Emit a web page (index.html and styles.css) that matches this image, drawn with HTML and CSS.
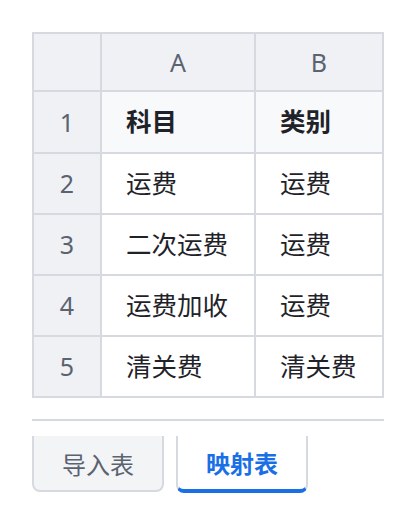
FILE: index.html
```html
<!DOCTYPE html>
<html lang="zh-CN">
<head>
<meta charset="utf-8">
<link rel="stylesheet" href="styles.css">
</head>
<body>
<div class="sheet">
  <div class="grid">
    <div class="cell corner"></div>
    <div class="cell colhead">A</div>
    <div class="cell colhead">B</div>

    <div class="cell rowhead">1</div>
    <div class="cell title">科目</div>
    <div class="cell title">类别</div>

    <div class="cell rowhead">2</div>
    <div class="cell data">运费</div>
    <div class="cell data">运费</div>

    <div class="cell rowhead">3</div>
    <div class="cell data">二次运费</div>
    <div class="cell data">运费</div>

    <div class="cell rowhead">4</div>
    <div class="cell data">运费加收</div>
    <div class="cell data">运费</div>

    <div class="cell rowhead">5</div>
    <div class="cell data">清关费</div>
    <div class="cell data">清关费</div>
  </div>
  <div class="divider"></div>
  <div class="tabs">
    <div class="tab">导入表</div>
    <div class="tab active">映射表</div>
  </div>
</div>
</body>
</html>
```

FILE: styles.css
```css
html, body {
  margin: 0;
  background: #ffffff;
}
body {
  padding: 32px;
  font-family: "Noto Sans", "Noto Sans CJK SC", sans-serif;
  color: #1f2329;
}
.sheet {
  width: 352px;
}
.grid {
  display: grid;
  grid-template-columns: 66px 152px 126px;
  grid-template-rows: 56px 60px 59px 59px 59px 59px;
  gap: 2px;
  padding: 2px;
  background: #d6d9df;
}
.cell {
  display: flex;
  align-items: center;
  font-size: 25.5px;
  line-height: 1;
  background: #ffffff;
}
.corner,
.colhead,
.rowhead {
  background: #eff1f5;
  color: #5b6270;
  justify-content: center;
  font-size: 25px;
}
.title {
  background: #f8f9fb;
  font-weight: 700;
  padding-left: 24px;
}
.data {
  padding-left: 24px;
}
.divider {
  height: 2px;
  background: #d6d9df;
  margin-top: 21px;
}
.tabs {
  display: flex;
  gap: 12px;
  margin-top: 15px;
}
.tab {
  width: 132px;
  height: 56px;
  box-sizing: border-box;
  display: flex;
  align-items: center;
  justify-content: center;
  font-size: 24px;
  color: #5b6270;
  background: #f3f4f6;
  border: 2px solid #d6d9df;
  border-top: none;
  border-radius: 0 0 8px 8px;
}
.tab.active {
  background: #ffffff;
  color: #1a6fe6;
  font-weight: 700;
  height: 57px;
  border-bottom: 4px solid #1a6fe6;
}
```
